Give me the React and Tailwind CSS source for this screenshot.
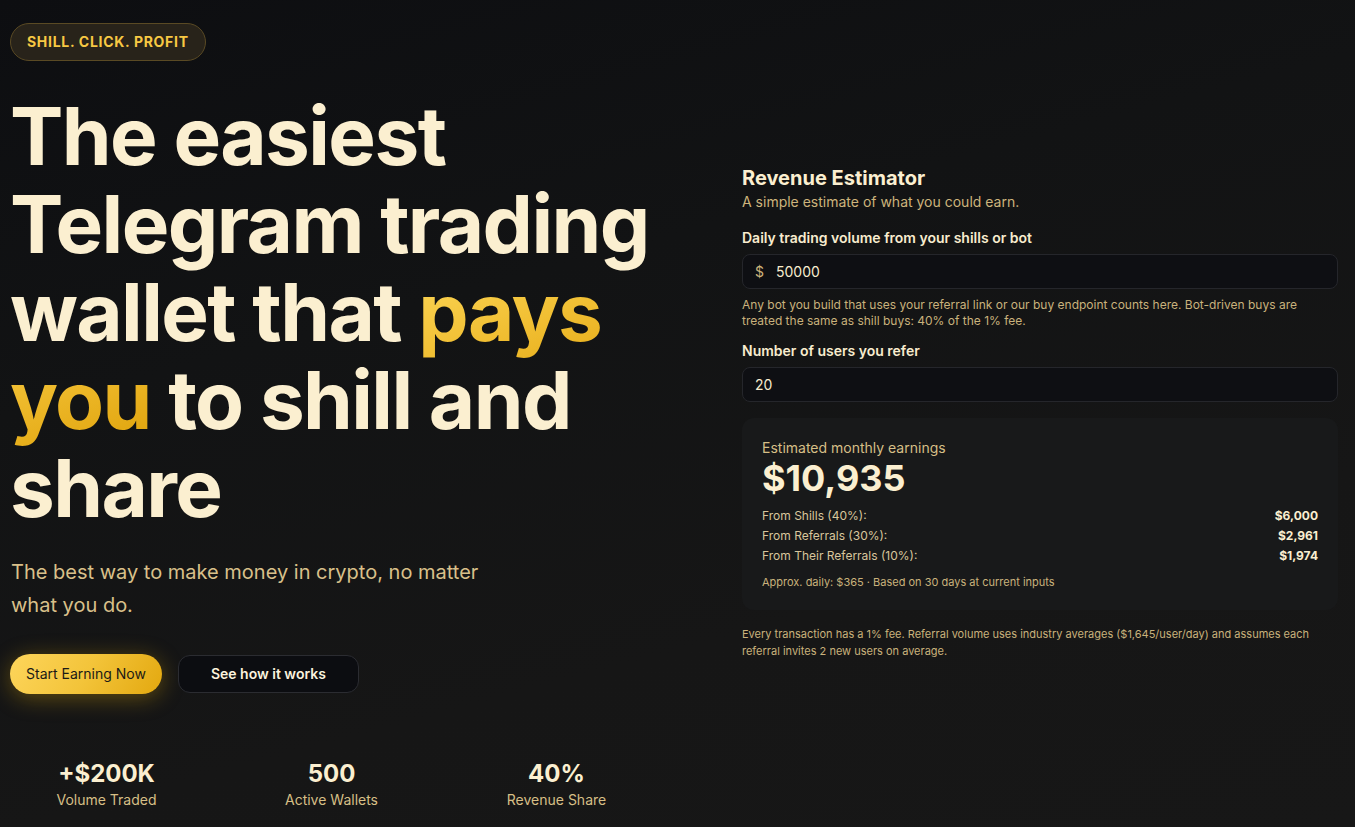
import React from "react";

function Stat({ value, label }) {
  return (
    <div className="flex flex-col items-center">
      <div className="text-2xl font-bold text-[#fbefd0] leading-8">{value}</div>
      <div className="text-sm text-[#d6bf86] leading-5">{label}</div>
    </div>
  );
}

function Row({ label, value }) {
  return (
    <div className="flex justify-between text-xs leading-5">
      <span className="text-[#d8c69c]">{label}</span>
      <span className="font-bold text-[#fbefd0]">{value}</span>
    </div>
  );
}

export default function App() {
  return (
    <div
      className="min-h-screen w-full bg-[linear-gradient(165deg,#0d0e11_0%,#121314_35%,#161616_70%,#171717_100%)] text-[#fbefd0]"
      style={{ fontFamily: "Inter, 'Noto Sans', sans-serif" }}
    >
      <div className="flex items-start pl-[10px] pr-[17px] pt-[23px] pb-[16px]">
        {/* Left column */}
        <div className="w-[690px] shrink-0">
          <div className="inline-flex h-[38px] items-center rounded-full border border-[#5a4a24] bg-[#28231a] px-4 text-sm font-bold tracking-wider text-[#f7c843]">
            SHILL. CLICK. PROFIT
          </div>
          <h1 className="mt-[31px] text-[80px] font-bold leading-[1.1] tracking-[-0.02em] text-[#fbefd0]">
            The easiest
            <br />
            Telegram trading
            <br />
            wallet that{" "}
            <span className="bg-[linear-gradient(160deg,#fdd85a_0%,#f0bd30_50%,#dfa20a_100%)] bg-clip-text text-transparent">
              pays
              <br />
              you
            </span>{" "}
            to shill and
            <br />
            share
          </h1>
          <p className="mt-6 max-w-[480px] pl-px text-xl leading-[33px] text-[#d9c08a]">
            The best way to make money in crypto, no matter what you do.
          </p>
          <div className="mt-8 flex items-center gap-4">
            <button className="h-10 rounded-full bg-[linear-gradient(120deg,#fdd55b_0%,#f3c43a_50%,#e3a80f_100%)] px-4 text-sm text-[#1b1a16] shadow-[0_4px_22px_rgba(234,179,8,0.35)]">
              Start Earning Now
            </button>
            <button className="h-[38px] rounded-xl border border-[#2b2c31] bg-[#0c0d11] px-8 text-sm font-semibold text-[#fbf3de]">
              See how it works
            </button>
          </div>
          <div className="mt-16 grid w-[643px] grid-cols-3 gap-8">
            <Stat value="+$200K" label="Volume Traded" />
            <Stat value="500" label="Active Wallets" />
            <Stat value="40%" label="Revenue Share" />
          </div>
        </div>

        {/* Right column */}
        <div className="ml-auto mt-[141px] w-[596px] shrink-0">
          <h2 className="text-xl font-bold leading-7 text-[#fbefd0]">Revenue Estimator</h2>
          <p className="text-sm leading-5 text-[#cdb47c]">A simple estimate of what you could earn.</p>

          <div className="mt-4 text-sm font-semibold leading-5 text-[#f8ecce]">
            Daily trading volume from your shills or bot
          </div>
          <div className="mt-1.5 flex h-[35px] items-center gap-3 rounded-lg border border-[#25262b] bg-[#0e0f13] px-3 text-sm">
            <span className="text-[#cdb47c]">$</span>
            <span className="text-[#f8ecce]">50000</span>
          </div>
          <p className="mt-2 text-xs leading-4 text-[#c9b27c]">
            Any bot you build that uses your referral link or our buy endpoint counts here. Bot-driven buys are treated the same as shill buys: 40% of the 1% fee.
          </p>

          <div className="mt-3 text-sm font-semibold leading-5 text-[#f8ecce]">
            Number of users you refer
          </div>
          <div className="mt-1.5 flex h-[35px] items-center rounded-lg border border-[#25262b] bg-[#0e0f13] px-3 text-sm text-[#f8ecce]">
            20
          </div>

          <div className="mt-4 rounded-xl bg-[#18191a] p-5">
            <div className="text-sm leading-5 text-[#d6bf86]">Estimated monthly earnings</div>
            <div className="text-4xl font-bold leading-10 text-[#fbefd0]">$10,935</div>
            <div className="mt-2">
              <Row label="From Shills (40%):" value="$6,000" />
              <Row label="From Referrals (30%):" value="$2,961" />
              <Row label="From Their Referrals (10%):" value="$1,974" />
            </div>
            <div className="mt-2 text-[11px] leading-4 text-[#c9b27c]">
              Approx. daily: $365 · Based on 30 days at current inputs
            </div>
          </div>

          <p className="mt-4 text-[11px] leading-[17px] text-[#c9b27c]">
            Every transaction has a 1% fee. Referral volume uses industry averages ($1,645/user/day) and assumes each referral invites 2 new users on average.
          </p>
        </div>
      </div>
    </div>
  );
}
